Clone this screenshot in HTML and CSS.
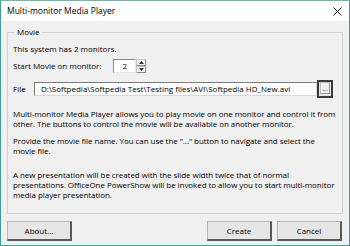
FILE: index.html
```html
<!DOCTYPE html>
<html>
<head>
<meta charset="utf-8">
<link rel="stylesheet" href="styles.css">
</head>
<body>
<div class="window">
  <div class="titlebar">
    <span class="title">Multi-monitor Media Player</span>
    <svg class="close" width="9" height="9" viewBox="0 0 9 9"><path d="M0.5 0.5L8.5 8.5M8.5 0.5L0.5 8.5" stroke="#222" stroke-width="1"/></svg>
  </div>
  <div class="content">
    <fieldset class="group">
      <legend class="legend">Movie</legend>
      <div class="line first">This system has 2 monitors.</div>
      <div class="row spin-row">
        <span>Start Movie on monitor:</span>
        <div class="spinner">
          <div class="spin-box">2</div>
          <div class="spin-btns">
            <div class="spin-btn"><svg width="5" height="3" viewBox="0 0 5 3"><path d="M2.5 0L5 3H0Z" fill="#333"/></svg></div>
            <div class="spin-btn"><svg width="5" height="3" viewBox="0 0 5 3"><path d="M0 0H5L2.5 3Z" fill="#333"/></svg></div>
          </div>
        </div>
      </div>
      <div class="row file-row">
        <span class="file-label">File</span>
        <div class="file-input">D:\Softpedia\Softpedia Test\Testing files\AVI\Softpedia HD_New.avi</div>
        <div class="browse"><span>...</span></div>
      </div>
      <p class="para p1">Multi-monitor Media Player allows you to play movie on one monitor and control it from other. The buttons to control the movie will be available on another monitor.</p>
      <p class="para p2"><span class="nowrap">Provide the movie file name. You can use the "..." button to navigate and select the</span><br>movie file.</p>
      <p class="para p3">A new presentation will be created with the slide width twice that of normal presentations. OfficeOne PowerShow will be invoked to allow you to start multi-monitor media player presentation.</p>
    </fieldset>
    <div class="buttons">
      <div class="btn">About...</div>
      <div class="spacer"></div>
      <div class="btn">Create</div>
      <div class="btn">Cancel</div>
    </div>
  </div>
</div>
</body>
</html>
```

FILE: styles.css
```css
* { box-sizing: border-box; }
html, body { margin: 0; padding: 0; }
body {
  width: 350px;
  height: 246px;
  font-family: "Open Sans", "Noto Sans", sans-serif;
  font-size: 8px;
  line-height: 10px;
  color: #000;
  background: #fff;
  overflow: hidden;
}
.window {
  width: 350px;
  height: 246px;
  border: 1px solid #3e9f92;
  border-top-color: #6bb8ad;
  display: flex;
  flex-direction: column;
}
.titlebar {
  height: 20px;
  background: #fff;
  display: flex;
  align-items: center;
  justify-content: space-between;
  padding: 0 7px 0 6px;
  flex: none;
}
.title { font-size: 8.5px; }
.close { display: block; }
.content {
  flex: 1;
  background: #f0f0f0;
  padding: 6px 6px 0 6px;
  display: flex;
  flex-direction: column;
}
.group {
  margin: 0;
  border: 1px solid #d2d2d2;
  padding: 0 1px 0 5px;
  height: 187px;
}
.legend {
  padding: 0 2px;
  margin-left: 2px;
  line-height: 10px;
}
.line.first { margin-top: 7px; }
.row { display: flex; align-items: center; }
.spin-row { margin-top: 5px; height: 14px; }
.spinner { display: flex; margin-left: 12px; height: 14px; }
.spin-box {
  width: 23px;
  height: 14px;
  background: #fff;
  border: 1px solid #8a8a8a;
  border-right-color: #e8e8e8;
  border-bottom-color: #e8e8e8;
  padding-left: 8px;
  line-height: 12px;
}
.spin-btns { display: flex; flex-direction: column; width: 10px; height: 14px; }
.spin-btn {
  flex: 1;
  display: flex;
  align-items: center;
  justify-content: center;
  background: #f0f0f0;
  border: 1px solid #c8c8c8;
  border-right-color: #8a8a8a;
  border-bottom-color: #8a8a8a;
}
.file-row { margin-top: 7px; height: 18px; }
.file-label { width: 21px; }
.file-input {
  width: 283px;
  height: 14px;
  background: #fff;
  border: 1px solid #7a7a7a;
  border-right-color: #d8d8d8;
  border-bottom-color: #d8d8d8;
  padding-left: 6px;
  line-height: 12px;
  white-space: nowrap;
  overflow: hidden;
}
.browse {
  width: 16px;
  height: 18px;
  border: 2px solid #3c3c3c;
  background: #e6e6e6;
  display: flex;
  align-items: flex-end;
  justify-content: center;
  padding-bottom: 2px;
}
.browse span {
  display: block;
  width: 10px;
  height: 12px;
  border: 1px solid #c0c0c0;
  border-right-color: #9a9a9a;
  border-bottom-color: #9a9a9a;
  background: #f0f0f0;
  font-size: 7px;
  line-height: 12px;
  text-align: center;
  color: #601d3b;
}
.para { margin: 0; letter-spacing: -0.06px; }
.nowrap { white-space: nowrap; }
.p1 { margin-top: 11px; }
.p2 { margin-top: 7px; }
.p3 { margin-top: 14px; }
.buttons {
  display: flex;
  margin-top: 7px;
  gap: 5px;
  padding-right: 1px;
}
.spacer { flex: 1; }
.btn {
  width: 65px;
  height: 20px;
  background: #e6e6e6;
  border: 1px solid #b4b4b4;
  border-right: 2px solid #5a5a5a;
  border-bottom: 2px solid #5a5a5a;
  display: flex;
  align-items: center;
  justify-content: center;
}
```
